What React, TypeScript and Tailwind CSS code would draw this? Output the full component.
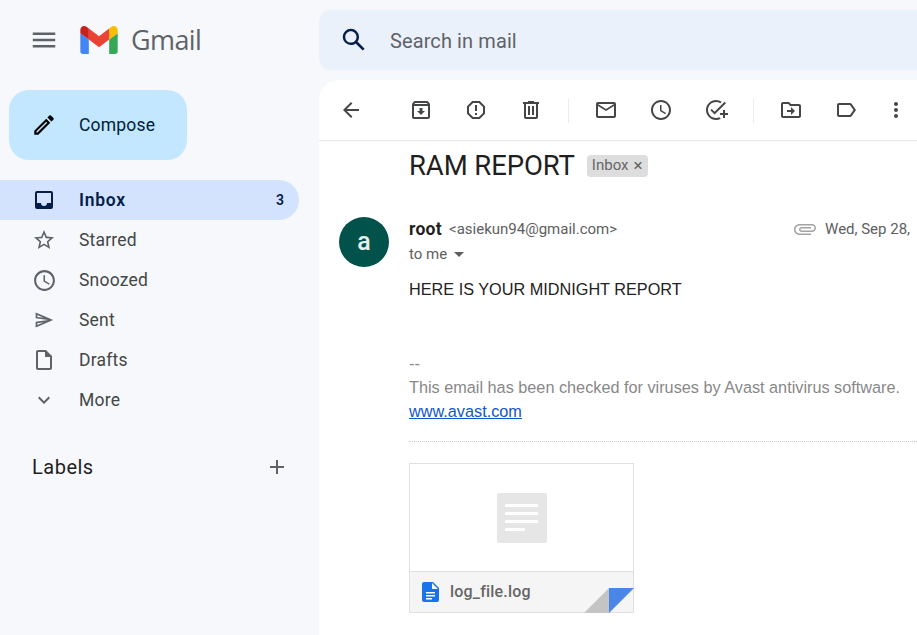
const paths = {
  menu: "M3 18h18v-2H3v2zm0-5h18v-2H3v2zm0-7v2h18V6H3z",
  search: "M20.49 19l-5.73-5.73C15.53 12.2 16 10.91 16 9.5A6.5 6.5 0 1 0 9.5 16c1.41 0 2.7-.47 3.77-1.24L19 20.49 20.49 19zM5 9.5C5 7.01 7.01 5 9.5 5S14 7.01 14 9.5 11.99 14 9.5 14 5 11.99 5 9.5z",
  pencil: "M3 17.25V21h3.75L17.81 9.94l-3.75-3.75L3 17.25zM5.92 19H5v-.92l9.06-9.06.92.92L5.92 19zM20.71 5.63l-2.34-2.34a1 1 0 0 0-1.41 0l-1.83 1.83 3.75 3.75 1.83-1.83a1 1 0 0 0 0-1.41z",
  inbox: "M19 3H5a2 2 0 0 0-2 2v14a2 2 0 0 0 2 2h14a2 2 0 0 0 2-2V5a2 2 0 0 0-2-2zm0 12h-4a3 3 0 0 1-6 0H5V5h14v10z",
  star: "M22 9.24l-7.19-.62L12 2 9.19 8.63 2 9.24l5.46 4.73L5.82 21 12 17.27 18.18 21l-1.63-7.03L22 9.24zM12 15.4l-3.76 2.27 1-4.28-3.32-2.88 4.38-.38L12 6.1l1.71 4.04 4.38.38-3.32 2.88 1 4.28L12 15.4z",
  clock: "M11.99 2C6.47 2 2 6.48 2 12s4.47 10 9.99 10C17.52 22 22 17.52 22 12S17.52 2 11.99 2zM12 20c-4.42 0-8-3.58-8-8s3.58-8 8-8 8 3.58 8 8-3.58 8-8 8zm.5-13H11v6l5.25 3.15.75-1.23-4.5-2.67z",
  send: "M4.01 6.03l7.51 3.22-7.52-1 .01-2.22m7.5 8.72L4 17.97v-2.22l7.51-1M2.01 3L2 10l15 2-15 2 .01 7L23 12 2.01 3z",
  draft: "M14 2H6c-1.1 0-2 .9-2 2v16c0 1.1.9 2 2 2h12c1.1 0 2-.9 2-2V8l-6-6zm4 18H6V4h7v5h5v11z",
  chevron: "M7.41 8.59L12 13.17l4.59-4.58L18 10l-6 6-6-6z",
  plus: "M19 13h-6v6h-2v-6H5v-2h6V5h2v6h6v2z",
  back: "M20 11H7.83l5.59-5.59L12 4l-8 8 8 8 1.41-1.41L7.83 13H20v-2z",
  archive: "M20.54 5.23l-1.39-1.68C18.88 3.21 18.47 3 18 3H6c-.47 0-.88.21-1.16.55L3.46 5.23C3.17 5.57 3 6.02 3 6.5V19c0 1.1.9 2 2 2h14c1.1 0 2-.9 2-2V6.5c0-.48-.17-.93-.46-1.27zM6.24 5h11.52l.81.97H5.44l.8-.97zM5 19V8h14v11H5zm8.45-9h-2.9v3H8l4 4 4-4h-2.55z",
  report: "M15.73 3H8.27L3 8.27v7.46L8.27 21h7.46L21 15.73V8.27L15.73 3zM19 14.9L14.9 19H9.1L5 14.9V9.1L9.1 5h5.8L19 9.1v5.8zM11 7h2v6h-2zM11 15h2v2h-2z",
  trash: "M15 4V3H9v1H4v2h1v13c0 1.1.9 2 2 2h10c1.1 0 2-.9 2-2V6h1V4h-5zm2 15H7V6h10v13zM9 8h2v9H9zm4 0h2v9h-2z",
  mail: "M20 4H4c-1.1 0-2 .9-2 2v12c0 1.1.9 2 2 2h16c1.1 0 2-.9 2-2V6c0-1.1-.9-2-2-2zm0 14H4V8l8 5 8-5v10zm-8-7L4 6h16l-8 5z",
  task: "M22 5.18L10.59 16.6l-4.24-4.24 1.41-1.41 2.83 2.83 10-10L22 5.18zM12 20c-4.41 0-8-3.59-8-8s3.59-8 8-8c1.57 0 3.04.46 4.28 1.25l1.45-1.45A9.9 9.9 0 0 0 12 2C6.48 2 2 6.48 2 12s4.48 10 10 10c1.73 0 3.36-.44 4.78-1.22l-1.5-1.5c-1 .46-2.11.72-3.28.72zm7-5h-3v2h3v3h2v-3h3v-2h-3v-3h-2v3z",
  move: "M20 6h-8l-2-2H4c-1.1 0-2 .9-2 2v12c0 1.1.9 2 2 2h16c1.1 0 2-.9 2-2V8c0-1.1-.9-2-2-2zm0 12H4V6h5.17l2 2H20v10zm-8-4H8v-2h4V9l4 4-4 4v-3z",
  label: "M17.63 5.84C17.27 5.33 16.67 5 16 5L5 5.01C3.9 5.01 3 5.9 3 7v10c0 1.1.9 1.99 2 1.99L16 19c.67 0 1.27-.33 1.63-.84L22 12l-4.37-6.16zM16 17H5V7h11l3.55 5L16 17z",
  more: "M12 8c1.1 0 2-.9 2-2s-.9-2-2-2-2 .9-2 2 .9 2 2 2zm0 2c-1.1 0-2 .9-2 2s.9 2 2 2 2-.9 2-2-.9-2-2-2zm0 6c-1.1 0-2 .9-2 2s.9 2 2 2 2-.9 2-2-.9-2-2-2z",
  attach: "M16.5 6v11.5c0 2.21-1.79 4-4 4s-4-1.79-4-4V5c0-1.38 1.12-2.5 2.5-2.5s2.5 1.12 2.5 2.5v10.5c0 .55-.45 1-1 1s-1-.45-1-1V6H10v9.5c0 1.38 1.12 2.5 2.5 2.5s2.5-1.12 2.5-2.5V5c0-2.21-1.79-4-4-4S7 2.79 7 5v12.5c0 3.04 2.46 5.5 5.5 5.5s5.5-2.46 5.5-5.5V6h-1.5z",
};

function Icon({ d, className }: { d: string; className?: string }) {
  return (
    <svg viewBox="0 0 24 24" fill="currentColor" className={className}>
      <path d={d} fillRule="evenodd" />
    </svg>
  );
}

const navItems = [
  { name: "Starred", icon: paths.star, size: "h-[24px] w-[24px]" },
  { name: "Snoozed", icon: paths.clock, size: "h-[25px] w-[25px]" },
  { name: "Sent", icon: paths.send, size: "h-[20px] w-[20px]" },
  { name: "Drafts", icon: paths.draft, size: "h-[24px] w-[24px]" },
  { name: "More", icon: paths.chevron, size: "h-[24px] w-[24px]" },
];

function GmailLogo() {
  return (
    <svg viewBox="52 42 88 66" className="h-[28px] w-[38px] shrink-0">
      <path fill="#4285f4" d="M58 108h14V74L52 59v43c0 3.32 2.69 6 6 6" />
      <path fill="#34a853" d="M120 108h14c3.32 0 6-2.69 6-6V59l-20 15" />
      <path fill="#fbbc04" d="M120 48v26l20-15v-8c0-7.42-8.47-11.65-14.4-7.2" />
      <path fill="#ea4335" d="M72 74V48l24 18 24-18v26L96 92" />
      <path fill="#c5221f" d="M52 51v8l20 15V48l-5.6-4.2c-5.94-4.45-14.4-.22-14.4 7.2" />
    </svg>
  );
}

function Sidebar() {
  return (
    <aside className="w-[319px] shrink-0 font-['Roboto',sans-serif]">
      <div className="flex h-[80px] items-center pl-[29px]">
        <Icon d={paths.menu} className="h-[30px] w-[30px] text-[#5f6368]" />
        <div className="ml-[21px]">
          <GmailLogo />
        </div>
        <span className="ml-[13px] font-['Open_Sans',sans-serif] text-[27px] tracking-[-0.6px] text-[#5f6368]">Gmail</span>
      </div>
      <button className="mt-[10px] ml-[9px] flex h-[70px] w-[178px] items-center rounded-[20px] bg-[#c2e7ff] pl-[22px]">
        <Icon d={paths.pencil} className="h-[26px] w-[26px] text-black" />
        <span className="ml-[22px] text-[17.5px] tracking-[0.2px] text-[#001d35]">Compose</span>
      </button>
      <nav className="mt-[20px] w-[299px] text-[17.5px] text-[#444746]">
        <div className="flex h-[40px] items-center rounded-r-[20px] bg-[#d3e3fd] pl-[32px] pr-[15px] font-semibold text-[#041e49]">
          <Icon d={paths.inbox} className="h-[24px] w-[24px]" />
          <span className="ml-[23px] flex-1 tracking-[0.7px]">Inbox</span>
          <span className="text-[14px]">3</span>
        </div>
        {navItems.map((item) => (
          <div key={item.name} className="flex h-[40px] items-center pl-[32px]">
            <div className="flex h-[24px] w-[24px] items-center justify-center">
              <Icon d={item.icon} className={`shrink-0 text-[#5f6368] ${item.size}`} />
            </div>
            <span className="ml-[23px] tracking-[0.2px]">{item.name}</span>
          </div>
        ))}
      </nav>
      <div className="mt-[33px] flex h-[28px] w-[299px] items-center justify-between pl-[32px] pr-[10px]">
        <span className="text-[20px] tracking-[0.5px] text-[#1f1f1f]">Labels</span>
        <Icon d={paths.plus} className="h-[24px] w-[24px] text-[#5f6368]" />
      </div>
    </aside>
  );
}

function Divider() {
  return <div className="mx-[25px] h-[25px] w-px shrink-0 bg-[#eceded]" />;
}

function ToolIcon({ d, className }: { d: string; className?: string }) {
  return (
    <div className={`flex h-[24px] w-[24px] shrink-0 items-center justify-center text-[#444746] ${className ?? ""}`}>
      <Icon d={d} className="h-[24px] w-[24px]" />
    </div>
  );
}

function Toolbar() {
  return (
    <div className="flex h-[61px] items-center border-b border-[#eaeaea] pl-[20px] shadow-[0_1px_2px_rgba(0,0,0,0.04)]">
      <ToolIcon d={paths.back} />
      <ToolIcon d={paths.archive} className="ml-[46px]" />
      <ToolIcon d={paths.report} className="ml-[31px]" />
      <ToolIcon d={paths.trash} className="ml-[31px]" />
      <Divider />
      <ToolIcon d={paths.mail} />
      <ToolIcon d={paths.clock} className="ml-[31px]" />
      <ToolIcon d={paths.task} className="ml-[31px]" />
      <Divider />
      <ToolIcon d={paths.move} />
      <ToolIcon d={paths.label} className="ml-[31px]" />
      <ToolIcon d={paths.more} className="ml-[26px]" />
    </div>
  );
}

function Attachment() {
  return (
    <div className="relative mt-[21px] h-[150px] w-[225px] border border-[#e0e0e0] bg-white">
      <div className="flex h-[107px] items-center justify-center">
        <div className="flex h-[50px] w-[50px] flex-col gap-[5px] rounded-[2px] bg-[#e6e6e6] px-[8px] pt-[11px]">
          <div className="h-[3px] w-[33px] bg-white" />
          <div className="h-[3px] w-[33px] bg-white" />
          <div className="h-[3px] w-[33px] bg-white" />
          <div className="h-[3px] w-[20px] bg-white" />
        </div>
      </div>
      <div className="flex h-[41px] items-center border-t border-[#e0e0e0] bg-[#f5f5f5] pl-[12px]">
        <svg viewBox="0 0 17 20" className="h-[20px] w-[17px] shrink-0">
          <path fill="#1a73e8" d="M2 0h9l6 6v12a2 2 0 0 1-2 2H2a2 2 0 0 1-2-2V2a2 2 0 0 1 2-2z" />
          <path fill="#fff" d="M10 1v6h6zM4 10h9v1.6H4zM4 13h9v1.6H4zM4 16h6v1.6H4z" />
        </svg>
        <span className="ml-[11px] font-['Roboto',sans-serif] text-[16px] font-medium tracking-[0.2px] text-[#666]">log_file.log</span>
      </div>
      <svg viewBox="0 0 50 25" className="absolute bottom-[-1px] right-[-1px] h-[25px] w-[50px]">
        <path fill="#c4c4c4" d="M0 25 25 0v25z" />
        <path fill="#4a86e8" d="M25 0h25L25 25z" />
      </svg>
    </div>
  );
}

function Message() {
  return (
    <div className="w-[598px]">
      <div className="flex h-[49px] items-center pl-[90px]">
        <h1 className="font-['Roboto',sans-serif] text-[27.5px] font-normal tracking-[-0.1px] text-[#1f1f1f]">RAM REPORT</h1>
        <span className="ml-[12px] flex h-[22px] items-center rounded-[4px] bg-[#dddddd] px-[5px] font-['Roboto',sans-serif] text-[15px] text-[#666]">
          Inbox
          <span className="ml-[5px] text-[17px] leading-none">×</span>
        </span>
      </div>
      <div className="mt-[27px] flex pl-[20px]">
        <div className="flex h-[50px] w-[50px] shrink-0 items-center justify-center rounded-full bg-[#00524a] font-['Roboto',sans-serif] text-[25px] font-medium text-[#e6efee]">
          a
        </div>
        <div className="ml-[20px] flex-1">
          <div className="flex h-[24px] items-center font-['Roboto',sans-serif]">
            <span className="text-[17.5px] font-bold tracking-[0.3px] text-[#1f1f1f]">root</span>
            <span className="ml-[7px] text-[15px] text-[#5e5e5e]">&lt;asiekun94@gmail.com&gt;</span>
            <Icon d={paths.attach} className="ml-[176px] h-[24px] w-[24px] shrink-0 rotate-90 text-[#a3a3a3]" />
            <span className="ml-[8px] whitespace-nowrap text-[15px] text-[#5e5e5e]">Wed, Sep 28,</span>
          </div>
          <div className="flex h-[26px] items-center font-['Roboto',sans-serif] text-[15px] text-[#5e5e5e]">
            to me
            <div className="ml-[7px] h-0 w-0 border-x-[5px] border-t-[5px] border-x-transparent border-t-[#5e5e5e]" />
          </div>
          <div className="font-['Liberation_Sans',sans-serif] text-[16.25px] leading-[24px] text-[#222]">
            <p className="mt-[10px]">HERE IS YOUR MIDNIGHT REPORT</p>
            <p className="mt-[50px] text-[#888]">--</p>
            <p className="text-[#888]">This email has been checked for viruses by Avast antivirus software.</p>
            <a className="text-[#1155cc] underline">www.avast.com</a>
          </div>
          <div className="mt-[18px] border-t border-dotted border-[#ccc]" />
          <Attachment />
        </div>
      </div>
    </div>
  );
}

export default function App() {
  return (
    <div className="flex h-[635px] w-[917px] overflow-hidden bg-[#f6f8fc]">
      <Sidebar />
      <main className="w-[598px] shrink-0">
        <div className="flex h-[80px] items-start pt-[10px]">
          <div className="flex h-[60px] w-[640px] shrink-0 items-center rounded-[12px] bg-[#eaf1fb] pl-[20px] font-['Roboto',sans-serif] text-[20px] tracking-[0.1px] text-[#5f6368]">
            <Icon d={paths.search} className="h-[30px] w-[30px] text-[#041e49]" />
            <span className="ml-[21px] pt-[2px]">Search in mail</span>
          </div>
        </div>
        <div className="h-[555px] overflow-hidden rounded-tl-[20px] bg-white">
          <Toolbar />
          <Message />
        </div>
      </main>
    </div>
  );
}
